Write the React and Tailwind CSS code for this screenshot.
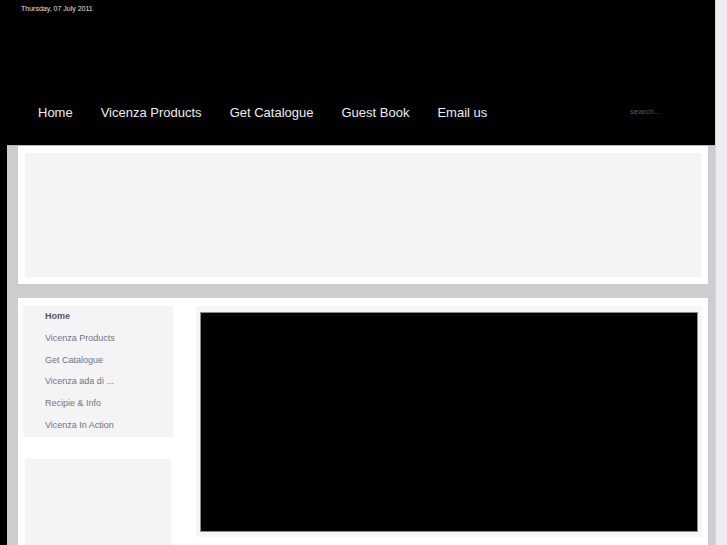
export default function App() {
  const nav = ["Home", "Vicenza Products", "Get Catalogue", "Guest Book", "Email us"];
  const menu = ["Home", "Vicenza Products", "Get Catalogue", "Vicenza ada di ...", "Recipie & Info", "Vicenza In Action"];
  return (
    <div className="flex h-[545px] w-[727px] overflow-hidden bg-black" style={{ fontFamily: '"Liberation Sans", Arial, sans-serif' }}>
      <div className="flex w-[715px] flex-col">
        <header className="relative h-[145px] shrink-0 bg-black">
          <div className="pl-[21px] pt-[5px] text-[7px] leading-[8px] text-[#e0e0e0]">Thursday, 07 July 2011</div>
          <nav className="absolute left-[38px] top-[105px] flex gap-[28px] text-[13px] leading-[16px] text-[#eeeeee]">
            {nav.map((n) => (
              <span key={n}>{n}</span>
            ))}
          </nav>
          <div className="absolute left-[630px] top-[107px] text-[8px] leading-[10px] text-[#5a5a5a]">search...</div>
        </header>
        <div className="ml-[7px] flex flex-1 flex-col border-t border-[#b8b8b8] bg-[#cdcdcf] pl-[11px] pr-[7px]">
          <div className="h-[138px] bg-white p-[7px]">
            <div className="h-full bg-[#f4f4f4]" />
          </div>
          <div className="mt-[14px] flex flex-1 bg-white pt-[8px]">
            <div className="flex w-[178px] flex-col pl-[5px]">
              <div className="flex h-[131px] w-[150px] flex-col bg-[#f4f4f4] pl-[22px] pt-0 text-[9px] leading-[21.8px] text-[#707386]">
                {menu.map((m, i) => (
                  <span key={m} className={i === 0 ? "font-bold text-[#555768]" : ""}>{m}</span>
                ))}
              </div>
              <div className="ml-[2px] mt-[22px] h-[200px] w-[146px] bg-[#f4f4f4]" />
            </div>
            <div className="h-[231px] w-[506px] bg-[#f6f6f6] px-[4px] pt-[6px]">
              <div className="h-[220px] border border-[#8a8a8a] bg-black" />
            </div>
          </div>
        </div>
      </div>
      <div className="w-[12px] border-l border-[#d8d8de] bg-[#ececf2]" />
    </div>
  );
}
